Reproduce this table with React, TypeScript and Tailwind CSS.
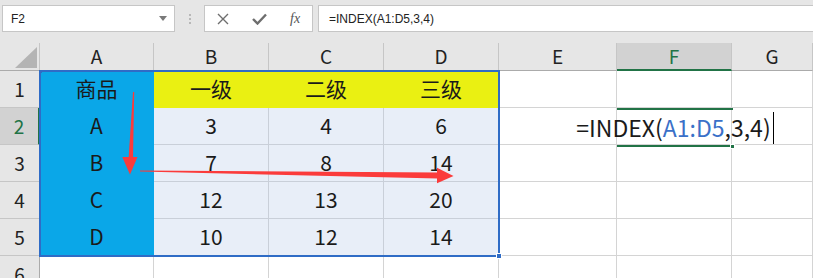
import React from "react";

const colW = "grid-cols-[40px_114px_115px_115px_115px_118px_115px_1fr]";
const letters = ["A", "B", "C", "D", "E", "F", "G"];

const data = [
  ["商品", "一级", "二级", "三级"],
  ["A", "3", "4", "6"],
  ["B", "7", "8", "14"],
  ["C", "12", "13", "20"],
  ["D", "10", "12", "14"],
];

function cellClass(r: number, c: number) {
  // r: 0-based row index (row 1 = 0), c: 0-based column (A = 0)
  if (r < 5 && c === 0) return "bg-[#0aa7e8] border-[#0aa7e8]";
  if (r === 0 && c >= 1 && c <= 3) return "bg-[#eaf012] border-[#eaf012]";
  if (r >= 1 && r < 5 && c >= 1 && c <= 3) return "bg-[#e8eef8] border-[#c9cfd9]";
  return "bg-white border-[#d4d4d4]";
}

function Toolbar() {
  return (
    <div className="h-[43px] flex items-start pt-[5px] text-[12px] text-[#222]">
      <div className="ml-[2px] w-[173px] h-[27px] border border-[#c6c6c6] bg-white flex items-center justify-between pl-[8px] pr-[7px]">
        <span>F2</span>
        <svg width="8" height="5" viewBox="0 0 8 5">
          <polygon points="0,0 8,0 4,5" fill="#7a7a7a" />
        </svg>
      </div>
      <div className="ml-[14px] mt-[9px] flex flex-col gap-[2px]">
        <div className="w-[2px] h-[2px] bg-[#b8b8b8]" />
        <div className="w-[2px] h-[2px] bg-[#b8b8b8]" />
        <div className="w-[2px] h-[2px] bg-[#b8b8b8]" />
      </div>
      <div className="ml-[13px] w-[109px] h-[27px] border border-[#c6c6c6] bg-white flex items-center pl-[12px]">
        <svg width="12" height="12" viewBox="0 0 12 12">
          <path d="M1 1 L11 11 M11 1 L1 11" stroke="#6e6e6e" strokeWidth="1.4" />
        </svg>
        <svg className="ml-[23px]" width="15" height="12" viewBox="0 0 15 12">
          <polyline points="1,6 5.5,10.5 14,1.5" fill="none" stroke="#6e6e6e" strokeWidth="2.4" />
        </svg>
        <span className="ml-[23px] italic text-[14px] text-[#555]" style={{ fontFamily: '"Liberation Serif", serif' }}>
          fx
        </span>
      </div>
      <div className="ml-[5px] flex-1 h-[27px] border border-r-0 border-[#c6c6c6] bg-white flex items-center pl-[10px]">
        =INDEX(A1:D5,3,4)
      </div>
    </div>
  );
}

function Grid() {
  return (
    <div className={`grid ${colW} auto-rows-[37px] grid-rows-[28px]`}>
      <div className="h-[28px] bg-[#e6e6e6] border-r border-b border-r-[#c6c6c6] border-b-[#ababab] relative">
        <svg className="absolute left-[15px] top-[4px]" width="22" height="21" viewBox="0 0 22 21">
          <polygon points="0,21 22,0 22,21" fill="#b4b4b4" />
        </svg>
      </div>
      {letters.map((l) =>
        l === "F" ? (
          <div
            key={l}
            className="h-[28px] bg-[#d2d2d2] border-r border-r-[#c6c6c6] border-b-2 border-b-[#217346] flex items-center justify-center text-[19px] text-[#217346]"
          >
            {l}
          </div>
        ) : (
          <div
            key={l}
            className="h-[28px] bg-[#e6e6e6] border-r border-r-[#c6c6c6] border-b border-b-[#ababab] flex items-center justify-center text-[19px] text-[#222]"
          >
            {l}
          </div>
        )
      )}
      {[0, 1, 2, 3, 4, 5].map((r) => (
        <React.Fragment key={r}>
          {r === 1 ? (
            <div className="bg-[#d2d2d2] border-b border-b-[#c6c6c6] border-r-2 border-r-[#217346] flex items-center justify-center text-[19px] text-[#217346]">
              {r + 1}
            </div>
          ) : (
            <div className="bg-[#e6e6e6] border-b border-b-[#c6c6c6] border-r border-r-[#ababab] flex items-center justify-center text-[19px] text-[#222]">
              {r + 1}
            </div>
          )}
          {letters.map((_, c) => (
            <div
              key={c}
              className={`border-r border-b flex items-center justify-center text-[21px] text-[#1a1a1a] ${cellClass(r, c)}`}
            >
              {r < 5 && c < 4 ? data[r][c] : ""}
            </div>
          ))}
        </React.Fragment>
      ))}
    </div>
  );
}

export default function App() {
  return (
    <div
      className="relative w-[813px] h-[278px] overflow-hidden bg-[#e6e6e6]"
      style={{ fontFamily: '"Noto Sans CJK SC", "Noto Sans", sans-serif' }}
    >
      <div style={{ fontFamily: '"Liberation Sans", Arial, sans-serif' }}>
        <Toolbar />
      </div>
      <Grid />

      {/* selection A1:D5 */}
      <div className="absolute left-[39px] top-[70px] w-[461px] h-[187px] border-2 border-[#2f6cc6]" />
      <div className="absolute left-[496px] top-[253px] w-[6px] h-[6px] bg-[#2f6cc6] border border-white" />
      <div className="absolute left-[39px] top-[70px] w-[3px] h-[3px] bg-[#2f6cc6]" />

      {/* active cell F2 in edit mode */}
      <div className="absolute left-[617px] top-[108px] w-[116px] h-[2px] bg-[#217346]" />
      <div className="absolute left-[617px] top-[145px] w-[116px] h-[2px] bg-[#217346]" />
      <div className="absolute left-[730px] top-[144px] w-[5px] h-[5px] bg-[#217346] border border-white" />
      <div className="absolute left-[617px] top-[109px] w-[116px] h-[37px] flex items-center justify-center">
        <div className="flex items-center whitespace-nowrap text-[23px] text-[#1a1a1a]">
          <span>=INDEX(</span>
          <span className="text-[#3a70c8]">A1:D5</span>
          <span>,3,4)</span>
          <span className="ml-[2px] w-[1px] h-[32px] bg-black" />
        </div>
      </div>

      {/* red arrows */}
      <svg className="absolute left-0 top-0 pointer-events-none" width="813" height="278">
        <polygon points="133,92 134.2,92 133,158 128.6,158" fill="#fb3b3b" />
        <polygon points="122.3,157 137.5,157 130,174.5" fill="#fb3b3b" />
        <polygon points="140,170.4 140,171.6 438,178.6 438,172.4" fill="#fb3b3b" />
        <polygon points="437,167.8 437,183.2 453.5,176" fill="#fb3b3b" />
      </svg>
    </div>
  );
}
